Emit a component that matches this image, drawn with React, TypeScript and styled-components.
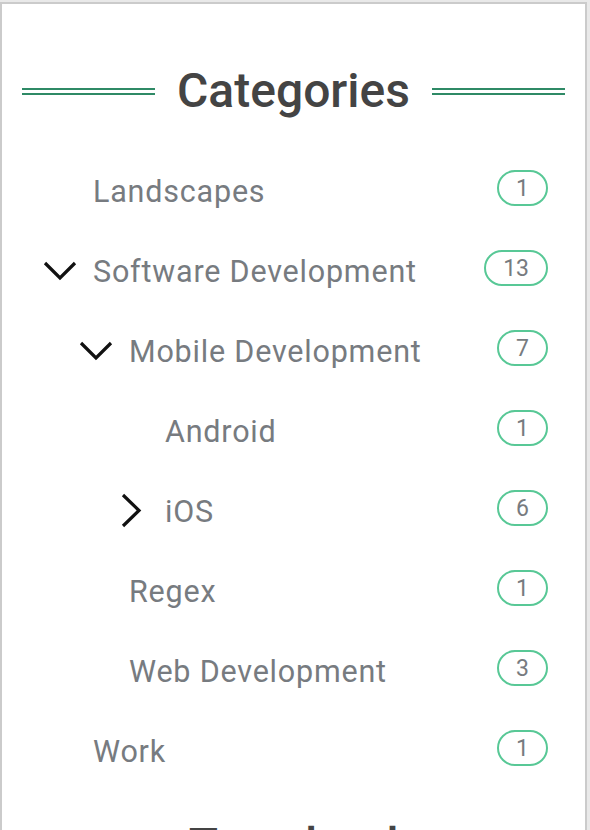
import * as React from 'react';
import styled, { createGlobalStyle } from 'styled-components';

interface Category {
    name: string;
    count: number;
    level: number;
    toggle?: 'open' | 'closed';
}

const categories: Category[] = [
    { name: 'Landscapes', count: 1, level: 0 },
    { name: 'Software Development', count: 13, level: 0, toggle: 'open' },
    { name: 'Mobile Development', count: 7, level: 1, toggle: 'open' },
    { name: 'Android', count: 1, level: 2 },
    { name: 'iOS', count: 6, level: 2, toggle: 'closed' },
    { name: 'Regex', count: 1, level: 1 },
    { name: 'Web Development', count: 3, level: 1 },
    { name: 'Work', count: 1, level: 0 },
];

const GlobalStyle = createGlobalStyle`
    html, body {
        margin: 0;
        padding: 0;
        background: #e9e9e9;
        font-family: Roboto, "Noto Sans", sans-serif;
        overflow: hidden;
        height: 830px;
    }
`;

const Card = styled.div`
    margin-top: 2px;
    width: 583px;
    height: 900px;
    background: #fff;
    border: 2px solid #cbcbcb;
    border-bottom: none;
    box-sizing: content-box;
`;

const Header = styled.div`
    display: flex;
    align-items: center;
    padding: 59px 20px 0 20px;
    height: 56px;
    gap: 22px;
`;

const Rule = styled.div`
    flex: 1;
    height: 3px;
    border-top: 2px solid #2f8a66;
    border-bottom: 2px solid #2f8a66;
`;

const Title = styled.h2`
    margin: 0;
    font-size: 48px;
    font-weight: 500;
    color: #444;
    line-height: 1;
`;

const List = styled.ul`
    list-style: none;
    margin: 0;
    padding: 32px 37px 0 0;
`;

const Row = styled.li<{ $level: number }>`
    display: flex;
    align-items: center;
    height: 80px;
    padding-left: ${p => 43 + p.$level * 36}px;
`;

const Toggle = styled.span`
    width: 48px;
    display: flex;
    align-items: center;
    flex-shrink: 0;
`;

const Label = styled.span`
    font-size: 30.5px;
    letter-spacing: 0.8px;
    color: #777b80;
    white-space: nowrap;
`;

const Badge = styled.span`
    margin-left: auto;
    height: 32px;
    padding: 0 17px;
    border: 2px solid #58c896;
    border-radius: 18px;
    display: flex;
    align-items: center;
    justify-content: center;
    font-size: 23px;
    color: #777b80;
    margin-top: -6px;
`;

const NextTitle = styled(Title)`
    text-align: center;
    padding-top: 31px;
`;

const ChevronDown = () => (
    <svg width="36" height="20" viewBox="0 0 36 20" style={{ marginLeft: -2 }}>
        <path d="M2 2 L17 17 L32 2" fill="none" stroke="#111" strokeWidth="3.2" />
    </svg>
);

const ChevronRight = () => (
    <svg width="24" height="36" viewBox="0 0 24 36" style={{ marginLeft: 3 }}>
        <path d="M3 2 L19 17.5 L3 33" fill="none" stroke="#111" strokeWidth="3.2" />
    </svg>
);

export default function App() {
    return (
        <>
            <GlobalStyle />
            <Card>
                <Header>
                    <Rule />
                    <Title>Categories</Title>
                    <Rule />
                </Header>
                <List>
                    {categories.map(c => (
                        <Row key={c.name} $level={c.level}>
                            <Toggle>
                                {c.toggle === 'open' && <ChevronDown />}
                                {c.toggle === 'closed' && <ChevronRight />}
                            </Toggle>
                            <Label>{c.name}</Label>
                            <Badge>{c.count}</Badge>
                        </Row>
                    ))}
                </List>
                <NextTitle>Tag cloud</NextTitle>
            </Card>
        </>
    );
}
